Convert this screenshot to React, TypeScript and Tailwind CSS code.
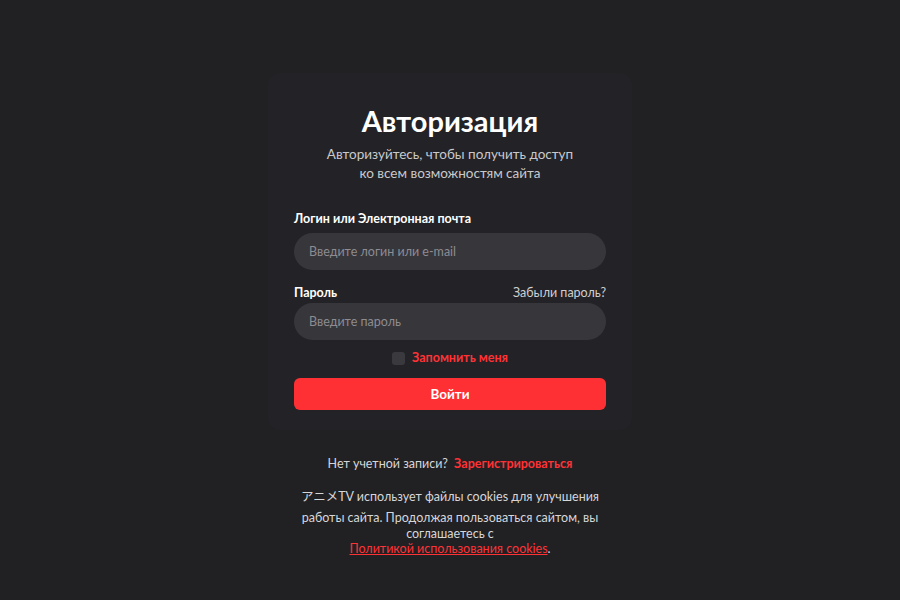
import { useState } from "react";

const font = { fontFamily: 'Lato, "Noto Sans CJK JP", sans-serif' };

export default function App() {
  const [remember, setRemember] = useState(false);

  return (
    <div className="flex h-[600px] w-full flex-col items-center bg-[#212124] text-white" style={font}>
      <div className="mt-[73px] w-[364px] rounded-xl bg-[#232327] px-[26px] pb-[20px] pt-[30px]">
        <h1 className="text-center text-[29px] font-bold leading-[36px]">Авторизация</h1>
        <p className="mt-[6px] text-center text-[13.5px] leading-[19px] text-[#c9c9cc]">
          Авторизуйтесь, чтобы получить доступ
          <br />
          ко всем возможностям сайта
        </p>

        <form className="mt-[27px]" onSubmit={(event) => event.preventDefault()}>
          <label className="block text-[12.5px] font-bold leading-[18px]">Логин или Электронная почта</label>
          <input
            type="text"
            placeholder="Введите логин или e-mail"
            className="mt-[5px] h-[37px] w-full rounded-full bg-[#37363b] px-[15px] text-[12.5px] text-white placeholder:text-[#8d8c91] outline-none"
          />

          <div className="mt-[14px] flex items-center justify-between text-[12.5px] leading-[18px]">
            <span className="font-bold">Пароль</span>
            <a href="#" className="text-[#cfcfd2]">
              Забыли пароль?
            </a>
          </div>
          <input
            type="password"
            placeholder="Введите пароль"
            className="mt-[1px] h-[37px] w-full rounded-full bg-[#37363b] px-[15px] text-[12.5px] text-white placeholder:text-[#8d8c91] outline-none"
          />

          <label className="mt-[9px] flex cursor-pointer items-center justify-center gap-[7px]">
            <span
              onClick={() => setRemember(!remember)}
              className={`h-[13px] w-[13px] rounded-[3px] ${remember ? "bg-[#ff3236]" : "bg-[#3a393e]"}`}
            />
            <span className="text-[12.5px] font-bold leading-[18px] text-[#ff3236]">Запомнить меня</span>
          </label>

          <button
            type="submit"
            className="mt-[11px] h-[32px] w-full rounded-[6px] bg-[#ff3034] text-[13.5px] font-bold text-white"
          >
            Войти
          </button>
        </form>
      </div>

      <div className="mt-[25px] text-[12.5px] leading-[18px] text-[#d6d6d9]">
        Нет учетной записи?{" "}
        <a href="#" className="ml-[3px] font-bold text-[#ff3236]">
          Зарегистрироваться
        </a>
      </div>

      <div className="mt-[12px] text-center text-[12.5px] text-[#d6d6d9]">
        <div className="whitespace-nowrap leading-[24px]">アニメTV использует файлы cookies для улучшения</div>
        <div className="whitespace-nowrap leading-[18px]">работы сайта. Продолжая пользоваться сайтом, вы</div>
        <div className="leading-[14px]">соглашаетесь с</div>
        <div className="leading-[16px]">
          <a href="#" className="text-[#ff3236] underline">
            Политикой использования cookies
          </a>
          .
        </div>
      </div>
    </div>
  );
}
